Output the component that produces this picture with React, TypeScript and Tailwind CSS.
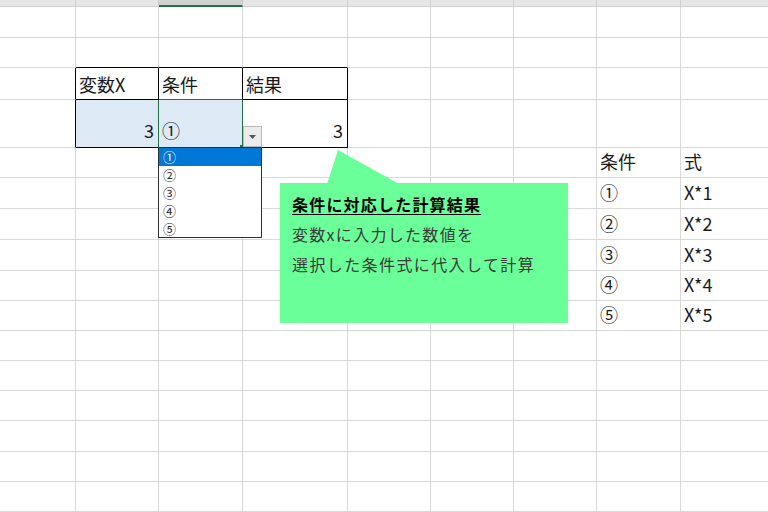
import React from "react";

const GRID = "border-[#d9d9d9]";
const colW = [76, 83, 84, 105, 83, 83, 83, 84, 88];
const rowH = [31, 30, 32, 48, 30, 31, 31, 31, 30, 30, 30, 30, 30, 31, 30, 30, 30];

type CellDef = { text?: string; align?: "l" | "r"; cls?: string; pb?: string };

function cellBorder(r: number, c: number): string {
  const right = (() => {
    if ((r === 2 || r === 3) && c === 0) return "border-r-[#000000]";
    if (r === 3 && (c === 1 || c === 2)) return "border-r-[#217346]";
    if ((r === 2 || r === 3) && c >= 1 && c <= 3) return "border-r-[#000000]";
    return "border-r-[#d9d9d9]";
  })();
  const bottom = (() => {
    if (r === 1 && c >= 1 && c <= 3) return "border-b-[#000000]";
    if (r === 2 && c === 2) return "border-b-[#217346]";
    if ((r === 2 || r === 3) && c >= 1 && c <= 3) return "border-b-[#000000]";
    return "border-b-[#d9d9d9]";
  })();
  return `${right} ${bottom}`;
}

const content: Record<string, CellDef> = {
  "2-1": { text: "変数X" },
  "2-2": { text: "条件" },
  "2-3": { text: "結果" },
  "3-1": { text: "3", align: "r", cls: "bg-[#dde9f5]", pb: "pb-[8px]" },
  "3-2": { text: "①", cls: "bg-[#dde9f5]", pb: "pb-[8px]" },
  "3-3": { text: "3", align: "r", pb: "pb-[8px]" },
  "4-7": { text: "条件", pb: "pb-[7px]" },
  "4-8": { text: "式", pb: "pb-[7px]" },
  "5-7": { text: "①", pb: "pb-[7px]" },
  "5-8": { text: "X*1", pb: "pb-[7px]" },
  "6-7": { text: "②", pb: "pb-[7px]" },
  "6-8": { text: "X*2", pb: "pb-[7px]" },
  "7-7": { text: "③", pb: "pb-[7px]" },
  "7-8": { text: "X*3", pb: "pb-[7px]" },
  "8-7": { text: "④", pb: "pb-[7px]" },
  "8-8": { text: "X*4", pb: "pb-[7px]" },
  "9-7": { text: "⑤", pb: "pb-[7px]" },
  "9-8": { text: "X*5", pb: "pb-[7px]" },
};

const font = { fontFamily: '"Noto Sans CJK JP", "Noto Sans", sans-serif' };

export default function App() {
  return (
    <div className="relative w-[768px] h-[512px] overflow-hidden bg-white text-[#1a1a1a]" style={font}>
      {/* column header strip */}
      <div className="flex h-[7px]">
        {colW.map((w, i) => (
          <div
            key={i}
            style={{ width: w }}
            className={
              i === 2
                ? "shrink-0 h-full bg-[#d2d2d2] border-b-2 border-b-[#217346] border-r border-r-[#c6c6c6]"
                : "shrink-0 h-full bg-[#e6e6e6] border-b border-b-[#cfcfcf] border-r border-r-[#cfcfcf]"
            }
          />
        ))}
      </div>
      {/* grid */}
      <div className="flex flex-col">
        {rowH.map((h, r) => (
          <div key={r} className="flex" style={{ height: h }}>
            {colW.map((w, c) => {
              const def = content[`${r}-${c}`];
              return (
                <div
                  key={c}
                  style={{ width: w }}
                  className={`shrink-0 h-full border-r border-b ${GRID} ${cellBorder(r, c)} ${def?.cls ?? ""} flex items-end ${
                    def?.align === "r" ? "justify-end pr-[4px]" : "justify-start pl-[3px]"
                  } ${def?.pb ?? "pb-[6px]"}`}
                >
                  {def?.text && <span className="text-[18px] leading-[18px] whitespace-nowrap">{def.text}</span>}
                </div>
              );
            })}
          </div>
        ))}
      </div>

      {/* fill handle */}
      <div className="absolute left-[240px] top-[145px] w-[4px] h-[4px] bg-[#217346]" />

      {/* dropdown button */}
      <div className="absolute left-[243px] top-[126px] w-[19px] h-[21px] bg-[#ececec] border border-[#b9b9b9] flex items-center justify-center">
        <svg width="7" height="4" viewBox="0 0 7 4">
          <polygon points="0,0 7,0 3.5,4" fill="#555" />
        </svg>
      </div>

      {/* dropdown list */}
      <div className="absolute left-[158px] top-[147px] w-[104px] h-[91px] bg-white border border-[#303030] flex flex-col">
        {["①", "②", "③", "④", "⑤"].map((t, i) => (
          <div
            key={t}
            className={
              i === 0
                ? "h-[18px] bg-[#0078d7] text-white text-[13px] leading-[18px] pl-[4px]"
                : "h-[18px] text-[#222] text-[13px] leading-[18px] pl-[4px]"
            }
          >
            {t}
          </div>
        ))}
      </div>

      {/* callout pointer */}
      <svg className="absolute left-0 top-0" width="768" height="512" viewBox="0 0 768 512" style={{ pointerEvents: "none" }}>
        <polygon points="338,150 327,184 399,184" fill="#6bff99" />
      </svg>
      {/* callout body */}
      <div className="absolute left-[280px] top-[183px] w-[288px] h-[140px] bg-[#6bff99] pl-[12px] pt-[6px]">
        <div className="text-[16px] leading-[30px] font-bold text-black underline underline-offset-[3px] tracking-[1.2px] whitespace-nowrap">
          条件に対応した計算結果
        </div>
        <div className="text-[16px] leading-[30px] text-[#3a3a3a] tracking-[1.3px] whitespace-nowrap">
          変数xに入力した数値を
        </div>
        <div className="text-[16px] leading-[30px] text-[#3a3a3a] tracking-[1.4px] whitespace-nowrap">
          選択した条件式に代入して計算
        </div>
      </div>
    </div>
  );
}
